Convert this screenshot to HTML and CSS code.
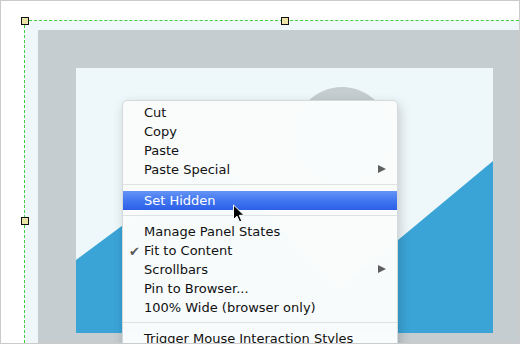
FILE: index.html
```html
<!DOCTYPE html>
<html>
<head>
<meta charset="utf-8">
<link rel="stylesheet" href="styles.css">
</head>
<body>
<div class="frame">
  <div class="sel">
    <div class="panel">
      <div class="pic">
        <svg width="417" height="265" viewBox="0 0 417 265">
          <circle cx="266" cy="67" r="48" fill="#c5cdd0"/>
          <polygon points="0,192 140,88 262,222 417,93 417,265 0,265" fill="#3aa4d7"/>
        </svg>
      </div>
    </div>
  </div>

  <span class="handle h1"></span>
  <span class="handle h2"></span>
  <span class="handle h3"></span>

  <div class="menu">
    <div class="item">Cut</div>
    <div class="item">Copy</div>
    <div class="item">Paste</div>
    <div class="item sub">Paste Special</div>
    <div class="sep"></div>
    <div class="item active">Set Hidden</div>
    <div class="sep"></div>
    <div class="item">Manage Panel States</div>
    <div class="item checked">Fit to Content</div>
    <div class="item sub">Scrollbars</div>
    <div class="item">Pin to Browser...</div>
    <div class="item">100% Wide (browser only)</div>
    <div class="sep"></div>
    <div class="item">Trigger Mouse Interaction Styles</div>
  </div>

  <svg class="cursor" width="14" height="20" viewBox="0 0 14 20">
    <path d="M1.5,1 L1.5,15.5 L5,12.2 L7.6,18 L9.8,17 L7.3,11.3 L12,11.3 Z" fill="#000" stroke="#fff" stroke-width="1" stroke-linejoin="round"/>
  </svg>
</div>
</body>
</html>
```

FILE: styles.css
```css
html, body {
  margin: 0;
  padding: 0;
  background: #fff;
}

.frame {
  position: relative;
  width: 520px;
  height: 344px;
  box-sizing: border-box;
  border: 1px solid #cbcbcb;
  background: #fff;
  overflow: hidden;
  padding: 19px 0 0 23px;
  display: flex;
  flex-direction: column;
  font-family: "DejaVu Sans", "Liberation Sans", sans-serif;
}

.sel {
  flex: 1;
  border-top: 1px dashed #3fcf3f;
  border-left: 1px dashed #3fcf3f;
  background: #eff7fa;
  padding: 9px 0 0 13px;
  display: flex;
  flex-direction: column;
}

.panel {
  flex: 1;
  background: #c5cdd0;
  padding: 38px 0 0 38px;
}

.pic {
  width: 417px;
  height: 265px;
  background: #eef7fa;
}

.pic svg {
  display: block;
}

.handle {
  position: absolute;
  width: 6px;
  height: 6px;
  border: 1px solid #111;
  background: #ece3a8;
}
.h1 { left: 20px; top: 16px; }
.h2 { left: 280px; top: 16px; }
.h3 { left: 20px; top: 216px; }

.menu {
  position: absolute;
  left: 121px;
  top: 99px;
  width: 274px;
  height: 260px;
  padding-top: 2px;
  background: rgba(250, 252, 252, 0.985);
  border: 1px solid #d4d9db;
  border-radius: 5px 5px 0 0;
  box-shadow: 2px 4px 12px rgba(0, 0, 0, 0.18);
  font-size: 13px;
  color: #111;
}

.item {
  position: relative;
  height: 19px;
  line-height: 19px;
  padding-left: 21px;
  white-space: nowrap;
}

.item.active {
  background: linear-gradient(to bottom, #6594f6 0%, #4277f0 50%, #2c5fe8 100%);
  color: #fff;
}

.item.checked::before {
  content: "\2714";
  position: absolute;
  left: 6px;
  top: 1px;
  font-size: 13px;
  color: #5a5a5a;
}

.item.sub::after {
  content: "";
  position: absolute;
  right: 11px;
  top: 5px;
  border-left: 8px solid #5f5f5f;
  border-top: 4.5px solid transparent;
  border-bottom: 4.5px solid transparent;
}

.sep {
  height: 1px;
  margin: 5px 0 6px;
  background: #dfe2e3;
}

.cursor {
  position: absolute;
  left: 231px;
  top: 203px;
}
```
